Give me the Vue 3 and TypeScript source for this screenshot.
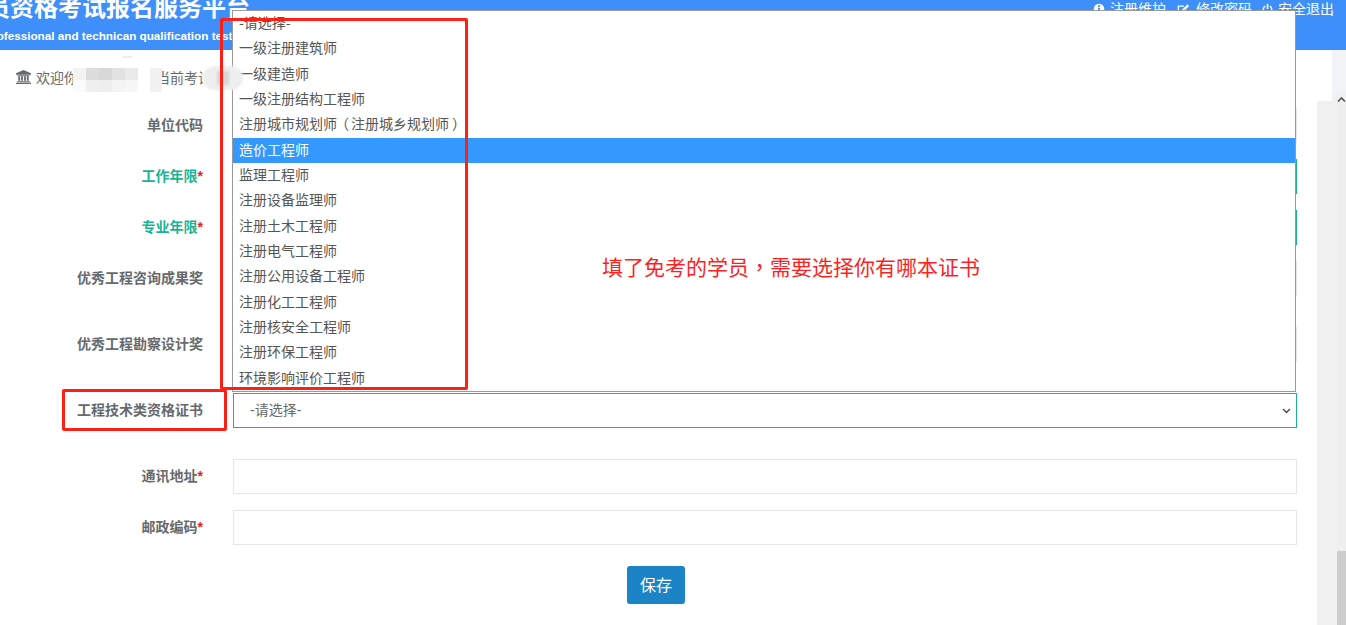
<script setup lang="ts">
interface Row {
  label: string
  required?: boolean
  green?: boolean
  gap?: boolean
  select?: boolean
}

interface Part {
  text: string
  kind: string
}

const rows: Row[] = [
  { label: '单位代码' },
  { label: '工作年限', required: true, green: true },
  { label: '专业年限', required: true, green: true },
  { label: '优秀工程咨询成果奖', gap: true },
  { label: '优秀工程勘察设计奖', gap: true },
  { label: '工程技术类资格证书', gap: true, select: true },
  { label: '通讯地址', required: true },
  { label: '邮政编码', required: true }
]

const options: string[] = [
  '-请选择-',
  '一级注册建筑师',
  '一级建造师',
  '一级注册结构工程师',
  '注册城市规划师（注册城乡规划师）',
  '造价工程师',
  '监理工程师',
  '注册设备监理师',
  '注册土木工程师',
  '注册电气工程师',
  '注册公用设备工程师',
  '注册化工工程师',
  '注册核安全工程师',
  '注册环保工程师',
  '环境影响评价工程师'
]

const mosaic: string[] = ['#f3f3f3', '#dcdcdc', '#d8d8d8', '#e2e2e2', '#e9eaea', '#fbfbfb', '#f0f0f0', '#eeeeee', '#f4f4f4', '#f6f7f7']

// Fullwidth punctuation sits centred in its cell in the reference's face.
function parts(text: string): Part[] {
  const kinds: Record<string, string> = { '（': 'open', '）': 'close', '，': 'comma' }
  return text
    .split(/([（），])/)
    .filter((t) => t.length > 0)
    .map((t) => ({ text: t, kind: kinds[t] ?? '' }))
}
</script>

<template>
  <div class="page">
    <header class="header">
      <div class="brand">
        <div class="title">员资格考试报名服务平台</div>
        <div class="subtitle">professional and technican qualification test service platform</div>
      </div>
      <nav class="links">
        <span class="link first">
          <svg class="ico" viewBox="0 0 14 14"><circle cx="7" cy="7" r="6.2" fill="#fff" /><rect x="6" y="2.4" width="2.2" height="2.2" fill="#3e8ffa" /><rect x="6" y="5.6" width="2.2" height="5.6" fill="#3e8ffa" /></svg>
          注册维护
        </span>
        <span class="link second">
          <svg class="ico wide" viewBox="0 0 15 14"><path d="M11 8.5V12.5H1.5V3H8" fill="none" stroke="#fff" stroke-width="1.4" /><path d="M5.5 7.5 12 1l2 2-6.5 6.5H5.5z" fill="#fff" /></svg>
          修改密码
        </span>
        <span class="link">
          <svg class="ico narrow" viewBox="0 0 14 14"><path d="M4 3.2a5.3 5.3 0 1 0 6 0" fill="none" stroke="#fff" stroke-width="1.8" /><rect x="6" y="0.5" width="2" height="6.5" fill="#fff" /></svg>
          安全退出
        </span>
      </nav>
    </header>

    <div class="body">
      <main class="content">
        <div class="welcome">
          <svg class="bank" viewBox="0 0 16 15"><path d="M8 0 16 3.6V5H0V3.6z" fill="#676a6c" /><path d="M1.5 5.6h13v1H1.5zM2.4 7h2v4.6h-2zM5.4 7h2v4.6h-2zM8.6 7h2v4.6h-2zM11.6 7h2v4.6h-2zM1.2 12h13.6v1.2H1.2zM0 13.6h16V15H0z" fill="#676a6c" /></svg>
          <span class="hello">欢迎你</span>
          <span class="mosaic">
            <i v-for="(shade, i) in mosaic" :key="i" :style="{ background: shade }"></i>
          </span>
          <span class="exam">当前考试</span>
        </div>

        <form class="form" @submit.prevent>
          <div v-for="row in rows" :key="row.label" class="row" :class="{ gap: row.gap }">
            <label class="label" :class="{ green: row.green }">{{ row.label }}<em v-if="row.required">*</em></label>
            <div v-if="row.select" class="control select">
              <span>-请选择-</span>
              <svg class="chev" viewBox="0 0 10 7"><path d="M1 1.2 5 5.2 9 1.2" fill="none" stroke="#3f4a54" stroke-width="1.6" /></svg>
            </div>
            <input v-else class="control" :class="{ valid: row.green }" type="text" />
          </div>
          <div class="actions"><button class="save" type="button">保存</button></div>
        </form>
      </main>

      <aside class="rail">
        <div class="rail-top"></div>
        <div class="rail-step"></div>
        <div class="rail-main">
          <div class="gutter"></div>
          <div class="track">
            <svg class="arrow" viewBox="0 0 9 8"><path d="M1 5.5 4.5 2 8 5.5" fill="none" stroke="#555" stroke-width="1.6" /></svg>
            <div class="thumb"></div>
          </div>
        </div>
      </aside>
    </div>

    <div class="popup">
      <div v-for="(opt, i) in options" :key="opt" class="option" :class="{ active: i === 5 }">
        <span v-for="(p, j) in parts(opt)" :key="j" :class="p.kind">{{ p.text }}</span>
      </div>
      <div class="note">
        <span v-for="(p, j) in parts('填了免考的学员，需要选择你有哪本证书')" :key="j" :class="p.kind">{{ p.text }}</span>
      </div>
    </div>

    <div class="fleck"></div>
    <div class="veil"></div>
    <div class="smudge"><b></b></div>
    <div class="mark mark-list"></div>
    <div class="mark mark-label"></div>
  </div>
</template>

<style>
html,
body {
  margin: 0;
  background: #fff;
  overflow: hidden;
}
</style>

<style scoped>
.page {
  position: relative;
  width: 1346px;
  height: 625px;
  overflow: hidden;
  background: #fff;
  color: #676a6c;
  font-family: "Liberation Sans", "Noto Sans CJK SC", sans-serif;
  font-size: 14px;
}
.header {
  display: flex;
  justify-content: space-between;
  height: 50px;
  overflow: hidden;
  background: #3e8ffa;
  color: #fff;
}
.brand {
  margin: -5px 0 0 -14px;
}
.title {
  font-size: 24px;
  line-height: 26px;
  font-weight: 700;
  white-space: nowrap;
}
.subtitle {
  margin: 8px 0 0 -1px;
  font-size: 11.7px;
  line-height: 14px;
  font-weight: 700;
  white-space: nowrap;
}
.links {
  display: flex;
  gap: 10px;
  padding: 0 12px 0 0;
  height: 18px;
  line-height: 18px;
}
.link {
  display: flex;
  align-items: center;
  gap: 5px;
  white-space: nowrap;
}
.link.first {
  margin-right: 1px;
}
.link.second {
  gap: 6px;
}
.ico {
  width: 12px;
  height: 12px;
}
.ico.wide {
  width: 13px;
  height: 13px;
}
.ico.narrow {
  width: 11px;
}
.body {
  display: flex;
  height: 575px;
}
.content {
  flex: 1;
  min-width: 0;
}
.welcome {
  display: flex;
  align-items: center;
  height: 58px;
  padding: 0 0 4px 16px;
  box-sizing: border-box;
  white-space: nowrap;
}
.bank {
  flex: none;
  width: 15px;
  height: 14px;
  margin-right: 5px;
}
.hello {
  width: 37px;
  overflow: hidden;
  flex: none;
}
.mosaic {
  display: grid;
  grid-template-columns: repeat(5, 13px);
  grid-auto-rows: 12px;
  flex: none;
  margin: 6px 18px 0 0;
}
.exam {
  flex: none;
  width: 47px;
  overflow: hidden;
}
.form {
  display: flex;
  flex-direction: column;
}
.row {
  display: flex;
  align-items: center;
  gap: 30px;
  margin-bottom: 16px;
}
.row.gap {
  margin-bottom: 31px;
}
.label {
  flex: none;
  width: 203px;
  text-align: right;
  font-weight: 700;
  line-height: 35px;
}
.label.green {
  color: #1ab394;
}
.label em {
  color: #ed1c24;
  font-style: normal;
}
.control {
  box-sizing: border-box;
  width: 1064px;
  height: 35px;
  margin: 0;
  padding: 0 12px;
  border: 1px solid #e5e6e7;
  background: #fff;
  outline: none;
}
.control.valid {
  border-color: #1ab394;
}
.select {
  display: flex;
  align-items: center;
  justify-content: space-between;
  padding: 0 5px 4px 16px;
  border-color: #1ab394;
}
.chev {
  width: 9px;
  height: 6px;
  margin-top: 4px;
}
.actions {
  display: flex;
  justify-content: center;
  padding: 5px 0 0 0;
  margin-left: -5px;
}
.save {
  width: 58px;
  height: 38px;
  padding: 0 0 2px;
  border: 0;
  border-radius: 3px;
  background: #1c84c6;
  color: #fff;
  font-family: inherit;
  font-size: 16px;
}
.rail {
  display: flex;
  flex-direction: column;
  flex: none;
  width: 29px;
}
.rail-top {
  flex: none;
  height: 43px;
  margin-left: 15px;
  background: #f3f4f8;
}
.rail-step {
  flex: none;
  height: 8px;
  margin-left: 15px;
  background: #f1f1f1;
}
.rail-main {
  display: flex;
  flex: 1;
}
.gutter {
  width: 20px;
  background: #f1f1f1;
}
.track {
  display: flex;
  flex-direction: column;
  justify-content: space-between;
  width: 9px;
  background: #eeeeee;
}
.arrow {
  display: block;
  width: 9px;
  height: 8px;
  margin-top: -5px;
}
.thumb {
  height: 74px;
  background: #cdcdcd;
}
.popup {
  position: absolute;
  left: 232px;
  top: 10px;
  box-sizing: border-box;
  width: 1064px;
  height: 382px;
  border: 1px solid #9a9a9a;
  background: #fff;
  font-family: "Noto Sans CJK SC", "Liberation Sans", sans-serif;
  color: #555;
}
.option {
  height: 25.33px;
  line-height: 23.4px;
  padding-left: 6px;
  white-space: nowrap;
}
.option.active {
  background: #3399ff;
  color: #fff;
}
.comma {
  font-family: "Noto Sans CJK TC", sans-serif;
}
.open {
  display: inline-block;
  transform: translateX(-2px);
}
.close {
  display: inline-block;
  transform: translateX(3px);
}
.note {
  position: absolute;
  left: 369px;
  top: 240px;
  color: #ff1f1f;
  font-size: 21px;
  line-height: 30px;
  white-space: nowrap;
}
.fleck {
  position: absolute;
  left: 122px;
  top: 56px;
  width: 10px;
  height: 2px;
  border-radius: 1px;
  background: #e6edf8;
}
.veil {
  position: absolute;
  left: 150px;
  top: 68px;
  width: 12px;
  height: 24px;
  background: #f1f1f1;
}
.smudge {
  position: absolute;
  left: 203px;
  top: 66px;
  display: flex;
  align-items: center;
  justify-content: center;
  width: 40px;
  height: 24px;
  border-radius: 12px;
  background: #eeeeee;
  filter: blur(1px);
}
.smudge b {
  width: 12px;
  height: 14px;
  background: #d6d6d6;
}
.mark {
  position: absolute;
  box-sizing: border-box;
  border: 3px solid #ff2015;
  border-radius: 2px;
}
.mark-list {
  left: 220px;
  top: 18px;
  width: 248px;
  height: 372px;
}
.mark-label {
  left: 62px;
  top: 389px;
  width: 165px;
  height: 42px;
}
</style>
